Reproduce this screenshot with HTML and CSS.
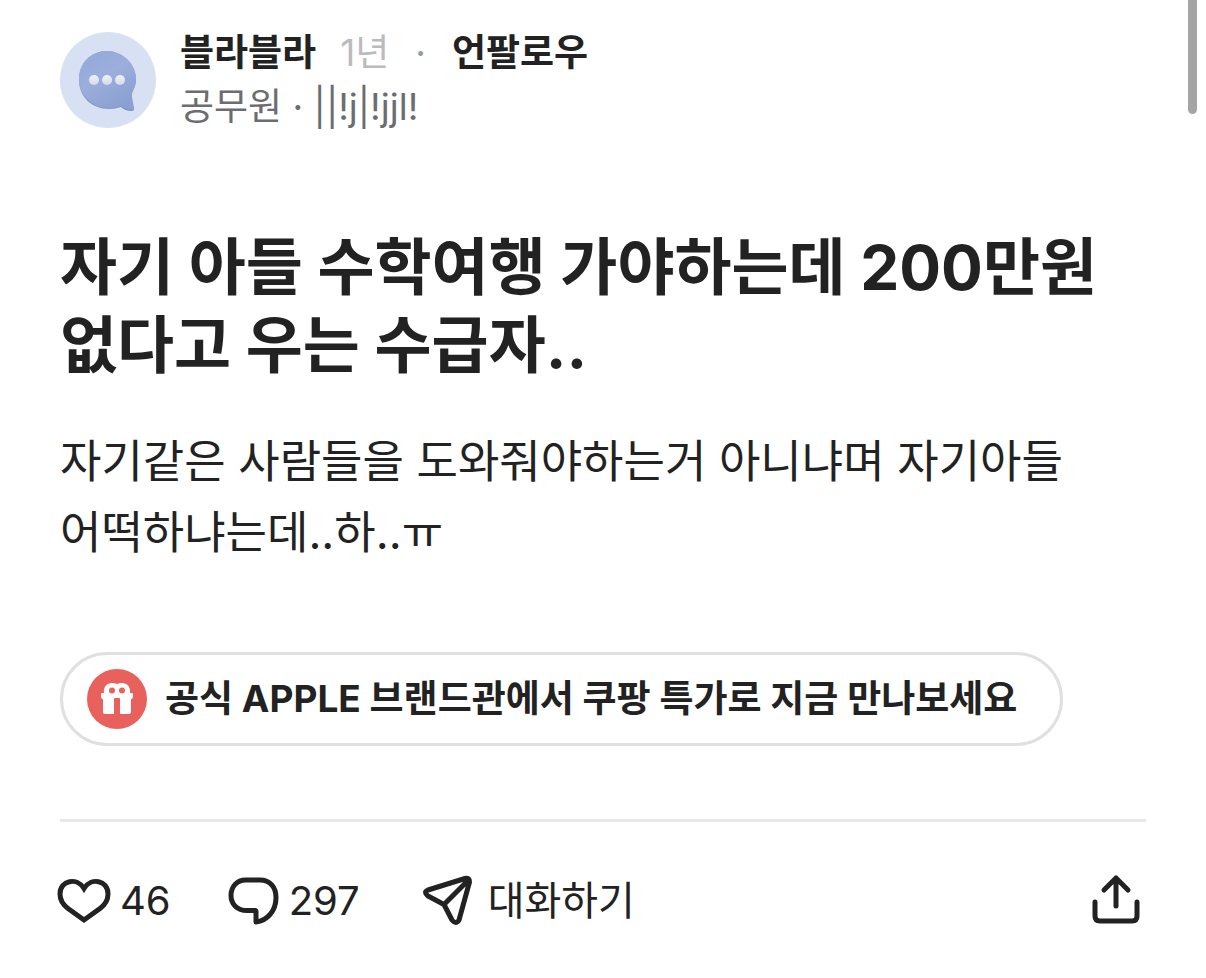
FILE: index.html
```html
<!DOCTYPE html>
<html lang="ko">
<head>
  <meta charset="UTF-8">
  <meta name="viewport" content="width=device-width, initial-scale=1.0">
  <title>블라블라</title>
  <link rel="stylesheet" href="styles.css">
</head>
<body>
  <div class="scroll-thumb"></div>

  <article class="post">
    <header class="post-header">
      <svg class="avatar" viewBox="0 0 96 96" aria-hidden="true">
        <defs>
          <linearGradient id="bubble" x1="0" y1="0" x2="0.6" y2="1">
            <stop offset="0" stop-color="#92a9da"/>
            <stop offset="0.5" stop-color="#9caedb"/>
            <stop offset="1" stop-color="#8ba1d2"/>
          </linearGradient>
          <linearGradient id="dot" x1="0" y1="0" x2="0" y2="1">
            <stop offset="0" stop-color="#eef1f7"/>
            <stop offset="1" stop-color="#d5dbea"/>
          </linearGradient>
        </defs>
        <circle cx="48" cy="48" r="48" fill="#d8e1f3"/>
        <path d="M47 19C61 19 76 31 76 48C76 56 71 60 71 65L74 77Q74 79 71 79Q65 79 61 75Q56 77 49 77C32 77 19 65 19 48C19 31 31 19 47 19Z" fill="#8297c9"/>
        <path d="M47 19C62 19 76 31 76 47C76 56 71 60 72 65L74 76Q74 78 71 77Q65 77 61 74Q56 76 49 76C32 76 19 63 19 47C19 31 31 19 47 19Z" fill="url(#bubble)"/>
        <g fill="url(#dot)">
          <circle cx="34" cy="48" r="5"/>
          <circle cx="47" cy="48" r="5"/>
          <circle cx="60" cy="48" r="5"/>
        </g>
      </svg>
      <div class="author">
        <div class="author-top">
          <a class="board" href="#">블라블라</a>
          <span class="time">1년</span>
          <span class="sep">·</span>
          <button class="follow" type="button">언팔로우</button>
        </div>
        <div class="author-sub">공무원 · ||!j|!jjl!</div>
      </div>
    </header>

    <h1 class="title">자기 아들 수학여행 가야하는데 200만원 없다고 우는 수급자..</h1>
    <p class="content">자기같은 사람들을 도와줘야하는거 아니냐며 자기아들 어떡하냐는데..하..ㅠ</p>

    <a class="promo" href="#">
      <svg class="gift" viewBox="0 0 60 60" aria-hidden="true">
        <circle cx="30" cy="30" r="30" fill="#e9615c"/>
        <path fill="#fff" fill-rule="evenodd" d="M15 24H17C16 18 20 14 25 14Q28 14 30 15Q32 14 35 14C40 14 44 18 43 24H45Q46 24 46 25V28Q46 30 44 30V43Q44 45 42 45H33V30Q33 29 32 29H28Q27 29 27 30V45H18Q16 45 16 43V30Q14 30 14 28V25Q14 24 15 24ZM25 18.500A3 3 0 1 0 25 24.500A3 3 0 1 0 25 18.500ZM35 18.500A3 3 0 1 0 35 24.500A3 3 0 1 0 35 18.500Z"/>
      </svg>
      <span>공식 APPLE 브랜드관에서 쿠팡 특가로 지금 만나보세요</span>
    </a>

    <footer class="actions">
      <button class="action like" type="button">
        <svg viewBox="0 0 56 56" aria-hidden="true">
          <path stroke-linejoin="miter" d="M28 47L12 35.500Q4 29.500 4 21C4 7 21 4 28 15.500C35 4 52 7 52 21Q52 29.500 44 35.500Z"/>
        </svg>
        46
      </button>
      <button class="action comment" type="button">
        <svg viewBox="0 0 56 56" aria-hidden="true">
          <path d="M20.500 7H35C45 7 51 14 51 24.500C51 38 42 48 31 49V38.500Q31 37.500 30 37.500H22C12 37.500 6 31 6 22.500C6 13.500 12 7 20.500 7Z"/>
        </svg>
        297
      </button>
      <button class="action chat" type="button">
        <svg viewBox="0 0 56 56" aria-hidden="true">
          <path d="M8 17L45 5.500Q50 4.500 49.500 9L39 47Q36 52 32 47L24 31.500L8 23Q3 19 8 17ZM24 31.500L48.500 7"/>
        </svg>
        대화하기
      </button>
      <button class="action share" type="button" aria-label="공유">
        <svg viewBox="0 0 56 56" aria-hidden="true">
          <path d="M26 33V5M14 17L26 5L38 17M5 29V43Q5 48 10 48H42Q47 48 47 43V29"/>
        </svg>
      </button>
    </footer>
  </article>
</body>
</html>
```

FILE: styles.css
```css
* {
  box-sizing: border-box;
}
body {
  margin: 0;
  background: #fff;
  color: #222;
  font-family: Inter, "Noto Sans CJK KR", sans-serif;
  word-break: keep-all;
}
a {
  color: inherit;
  text-decoration: none;
}
button {
  padding: 0;
  border: none;
  background: none;
  color: inherit;
  font: inherit;
  cursor: pointer;
}
svg {
  display: block;
  flex: none;
}
.scroll-thumb {
  position: absolute;
  top: 0;
  right: 9px;
  width: 9px;
  height: 114px;
  background: #a5a5a5;
  border-radius: 0 0 5px 5px;
}
.post {
  padding: 26px 60px 0;
}
.post-header {
  display: flex;
  align-items: center;
  gap: 24px;
}
.avatar {
  width: 96px;
  height: 96px;
}
.author {
  font-size: 37px;
  line-height: 54px;
}
.author-top {
  display: flex;
}
.board,
.follow {
  font-weight: 600;
}
.time {
  margin-left: 24px;
  color: #bbbbbf;
}
.sep {
  margin: 0 26px;
  color: #999;
}
.author-sub {
  color: #6b6d70;
}
.title {
  margin: 95px 0 0;
  font-size: 62px;
  font-weight: 700;
  line-height: 78px;
}
.content {
  margin: 41px 0 0;
  font-size: 45px;
  line-height: 71px;
}
.promo {
  display: inline-flex;
  align-items: center;
  gap: 18px;
  margin-top: 84px;
  padding: 14px 43px 14px 24px;
  border: 3px solid #dfe0e2;
  border-radius: 48px;
  font-size: 37px;
  font-weight: 700;
  line-height: 60px;
}
.gift {
  width: 60px;
  height: 60px;
}
.actions {
  display: flex;
  align-items: center;
  margin-top: 73px;
  padding-top: 51px;
  border-top: 3px solid #e8e8e9;
}
.action {
  display: flex;
  align-items: center;
  gap: 8px;
  font-size: 40px;
  line-height: 56px;
}
.action svg {
  width: 56px;
  height: 56px;
  fill: none;
  stroke: #222;
  stroke-width: 5;
  stroke-linecap: round;
  stroke-linejoin: round;
}
.like {
  margin-left: -4px;
}
.comment {
  margin-left: 54px;
}
.chat {
  gap: 12px;
  margin-left: 60px;
}
.share {
  margin-left: auto;
}
```
